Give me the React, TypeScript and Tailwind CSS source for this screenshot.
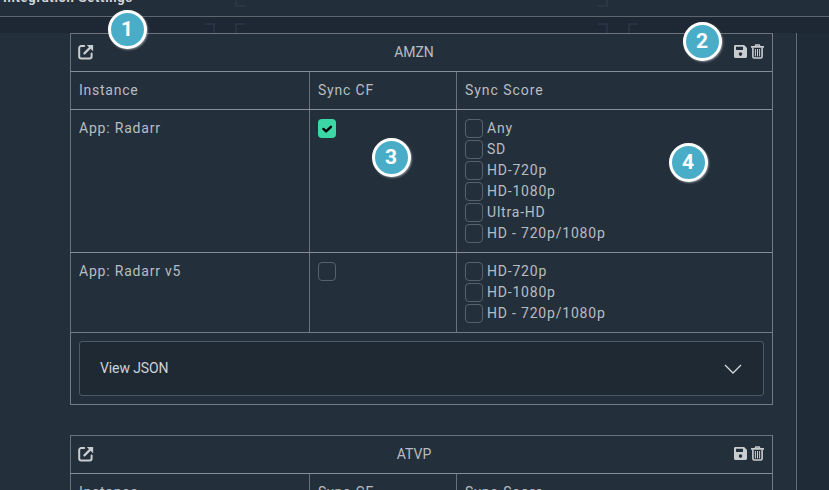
function ExternalIcon() {
  return (
    <svg viewBox="0 0 16 16" className="mb-[2px] h-4 w-4 text-[#c9cdd0]" fill="none" stroke="currentColor" strokeWidth="2">
      <path d="M6.2 2H3.2A2 2 0 0 0 1.2 4v8.4a2 2 0 0 0 2 2h8.4a2 2 0 0 0 2-2V9.6" strokeLinecap="round" />
      <path d="m6.4 9.4 5.8-5.8" strokeWidth="2.2" strokeLinecap="round" />
      <path d="M8.8.9h6.3v6.3z" fill="currentColor" stroke="none" />
    </svg>
  );
}

function SaveIcon() {
  return (
    <svg viewBox="0 0 13 13" className="h-[13px] w-[13px]" fill="currentColor">
      <path fillRule="evenodd" d="M1.4 0h8.2c.4 0 .7.1 1 .4l2 2c.3.3.4.6.4 1v8.2c0 .8-.6 1.4-1.4 1.4H1.4C.6 13 0 12.4 0 11.6V1.4C0 .6.6 0 1.4 0ZM2 2.1v2.5c0 .2.2.4.4.4h6.2c.2 0 .4-.2.4-.4V2.1c0-.2-.2-.4-.4-.4H2.4c-.2 0-.4.2-.4.4Zm4.5 5.2a1.8 1.8 0 1 0 0 3.6 1.8 1.8 0 0 0 0-3.6Z" />
    </svg>
  );
}

function TrashIcon() {
  return (
    <svg viewBox="0 0 13 15" className="h-[15px] w-[13px]" fill="none" stroke="currentColor">
      <path d="M.4 2.9h12.2" strokeWidth="1.6" strokeLinecap="round" />
      <path d="M4 2.6 4.8 1h3.4L9 2.6" strokeWidth="1.4" />
      <path d="M1.9 3.5v9c0 .9.5 1.5 1.3 1.5h6.6c.8 0 1.3-.6 1.3-1.5v-9" strokeWidth="1.6" />
      <path d="M4.4 5v7.4M6.5 5v7.4M8.6 5v7.4" strokeWidth="1" />
    </svg>
  );
}

function Box({ checked = false }: { checked?: boolean }) {
  return checked ? (
    <span className="flex h-[19px] w-[18px] shrink-0 items-center justify-center rounded-[4px] bg-[#3dd6a5]">
      <svg viewBox="0 0 18 19" className="h-[19px] w-[18px]" fill="none" stroke="#000" strokeWidth="2.4" strokeLinecap="round" strokeLinejoin="round">
        <path d="m5.4 9.9 2.7 2.5 4.8-4.6" />
      </svg>
    </span>
  ) : (
    <span className="block h-[19px] w-[18px] shrink-0 rounded-[4px] border border-[#56616c]" />
  );
}

function Option({ label }: { label: string }) {
  return (
    <label className="flex h-[21px] items-start gap-[4px]">
      <Box />
      <span className="leading-[19px] tracking-[0.8px] whitespace-pre">{label}</span>
    </label>
  );
}

const cols = "grid grid-cols-[239px_147px_317px]";
const cell = "border-l border-[#69727a] pl-2";

function TableHead({ title }: { title: string }) {
  return (
    <>
      <div className="flex h-[38px] items-center justify-between border-t border-l border-[#69727a] pr-2 pl-[7px]">
        <ExternalIcon />
        <span className="ml-[-1px]">{title}</span>
        <span className="mb-[2px] -ml-[1px] flex items-center gap-[4px] text-[#c9cdd0]">
          <SaveIcon />
          <TrashIcon />
        </span>
      </div>
      <div className={`${cols} h-[38px] border-t border-[#858e96]`}>
        <div className={`${cell} leading-[37px] tracking-[0.75px]`}>Instance</div>
        <div className={`${cell} leading-[37px] tracking-[0.8px]`}>Sync CF</div>
        <div className={`${cell} leading-[37px] tracking-[0.95px]`}>Sync Score</div>
      </div>
    </>
  );
}

function Marker({ n, place }: { n: number; place: string }) {
  return (
    <span className={`absolute flex h-[39px] w-[39px] items-center justify-center rounded-full border-[3px] border-white bg-[#4aadc8] pt-[2px] text-[21px] font-bold text-white shadow-[1px_1px_2px_0px_rgba(190,195,200,0.6)] ${place}`}>
      {n}
    </span>
  );
}

export default function App() {
  return (
    <div className="relative h-[490px] w-[829px] overflow-hidden bg-[#1e2836] font-['Roboto','Liberation_Sans',sans-serif] text-[14px] text-[#b8bdc1]">
      <div className="h-[17px] overflow-hidden border-b border-[#5c666e] bg-[#222e3a]">
        <div className="mt-[-12px] ml-[3px] text-[13px] leading-[20px] font-bold tracking-[0.7px] text-[#d2d5d7]">Integration Settings</div>
      </div>
      <div className="h-4 bg-[#1e2835]" />
      <div className="flex h-[457px]">
        <main className="w-[797px] border-r border-[#636b73] bg-[#242f3c] pl-[70px]">
          <section className="w-[703px] border-r border-b border-[#737c83]">
            <TableHead title="AMZN" />
            <div className={`${cols} h-[143px] border-t border-[#858e96]`}>
              <div className={`${cell} pt-[9px] leading-[19px] tracking-[0.8px]`}>App: Radarr</div>
              <div className={`${cell} pt-[9px]`}><Box checked /></div>
              <div className={`${cell} pt-[9px]`}>
                <Option label="Any" />
                <Option label="SD" />
                <Option label="HD-720p" />
                <Option label="HD-1080p" />
                <Option label="Ultra-HD" />
                <Option label="HD - 720p/1080p" />
              </div>
            </div>
            <div className={`${cols} h-[80px] border-t border-[#858e96]`}>
              <div className={`${cell} pt-[9px] leading-[19px] tracking-[0.8px]`}>App: Radarr v5</div>
              <div className={`${cell} pt-[9px]`}><Box /></div>
              <div className={`${cell} pt-[9px]`}>
                <Option label="HD-720p" />
                <Option label="HD-1080p" />
                <Option label="HD - 720p/1080p" />
              </div>
            </div>
            <div className="h-[72px] border-t border-l border-[#737c83] px-2 pt-2">
              <button className="flex h-[55px] w-full items-center justify-between rounded-[3px] border border-[#4d5a63] bg-[#1e2934] pr-[21px] pl-5 text-[#ced2d5]">
                <span className="tracking-[-0.1px]">View JSON</span>
                <svg viewBox="0 0 18 10" className="h-[10px] w-[18px]" fill="none" stroke="#d5d8da" strokeWidth="1.3">
                  <path d="m1 1 8 8 8-8" />
                </svg>
              </button>
            </div>
          </section>
          <section className="mt-[30px] w-[703px] border-r border-[#737c83]">
            <TableHead title="ATVP" />
          </section>
        </main>
        <div className="flex-1 bg-[#202b38]" />
      </div>
      <span className="absolute top-[-4px] left-[235px] h-[11px] w-[10px] border-b-2 border-l-2 border-[#2b3743]" />
      <span className="absolute top-[-4px] left-[598px] h-[11px] w-[10px] border-r-2 border-b-2 border-[#2b3743]" />
      <span className="absolute top-[23px] left-[205px] h-[10px] w-[10px] border-t-2 border-r-2 border-[#273340]" />
      <span className="absolute top-[23px] left-[235px] h-[10px] w-[10px] border-t-2 border-l-2 border-[#273340]" />
      <span className="absolute top-[23px] left-[598px] h-[10px] w-[10px] border-t-2 border-r-2 border-[#273340]" />
      <span className="absolute top-[23px] left-[628px] h-[10px] w-[10px] border-t-2 border-l-2 border-[#273340]" />
      <Marker n={1} place="top-[9.5px] left-[107.5px]" />
      <Marker n={2} place="top-[21.5px] left-[682.5px]" />
      <Marker n={3} place="top-[137.5px] left-[371.5px]" />
      <Marker n={4} place="top-[142.5px] left-[668.5px]" />
    </div>
  );
}
